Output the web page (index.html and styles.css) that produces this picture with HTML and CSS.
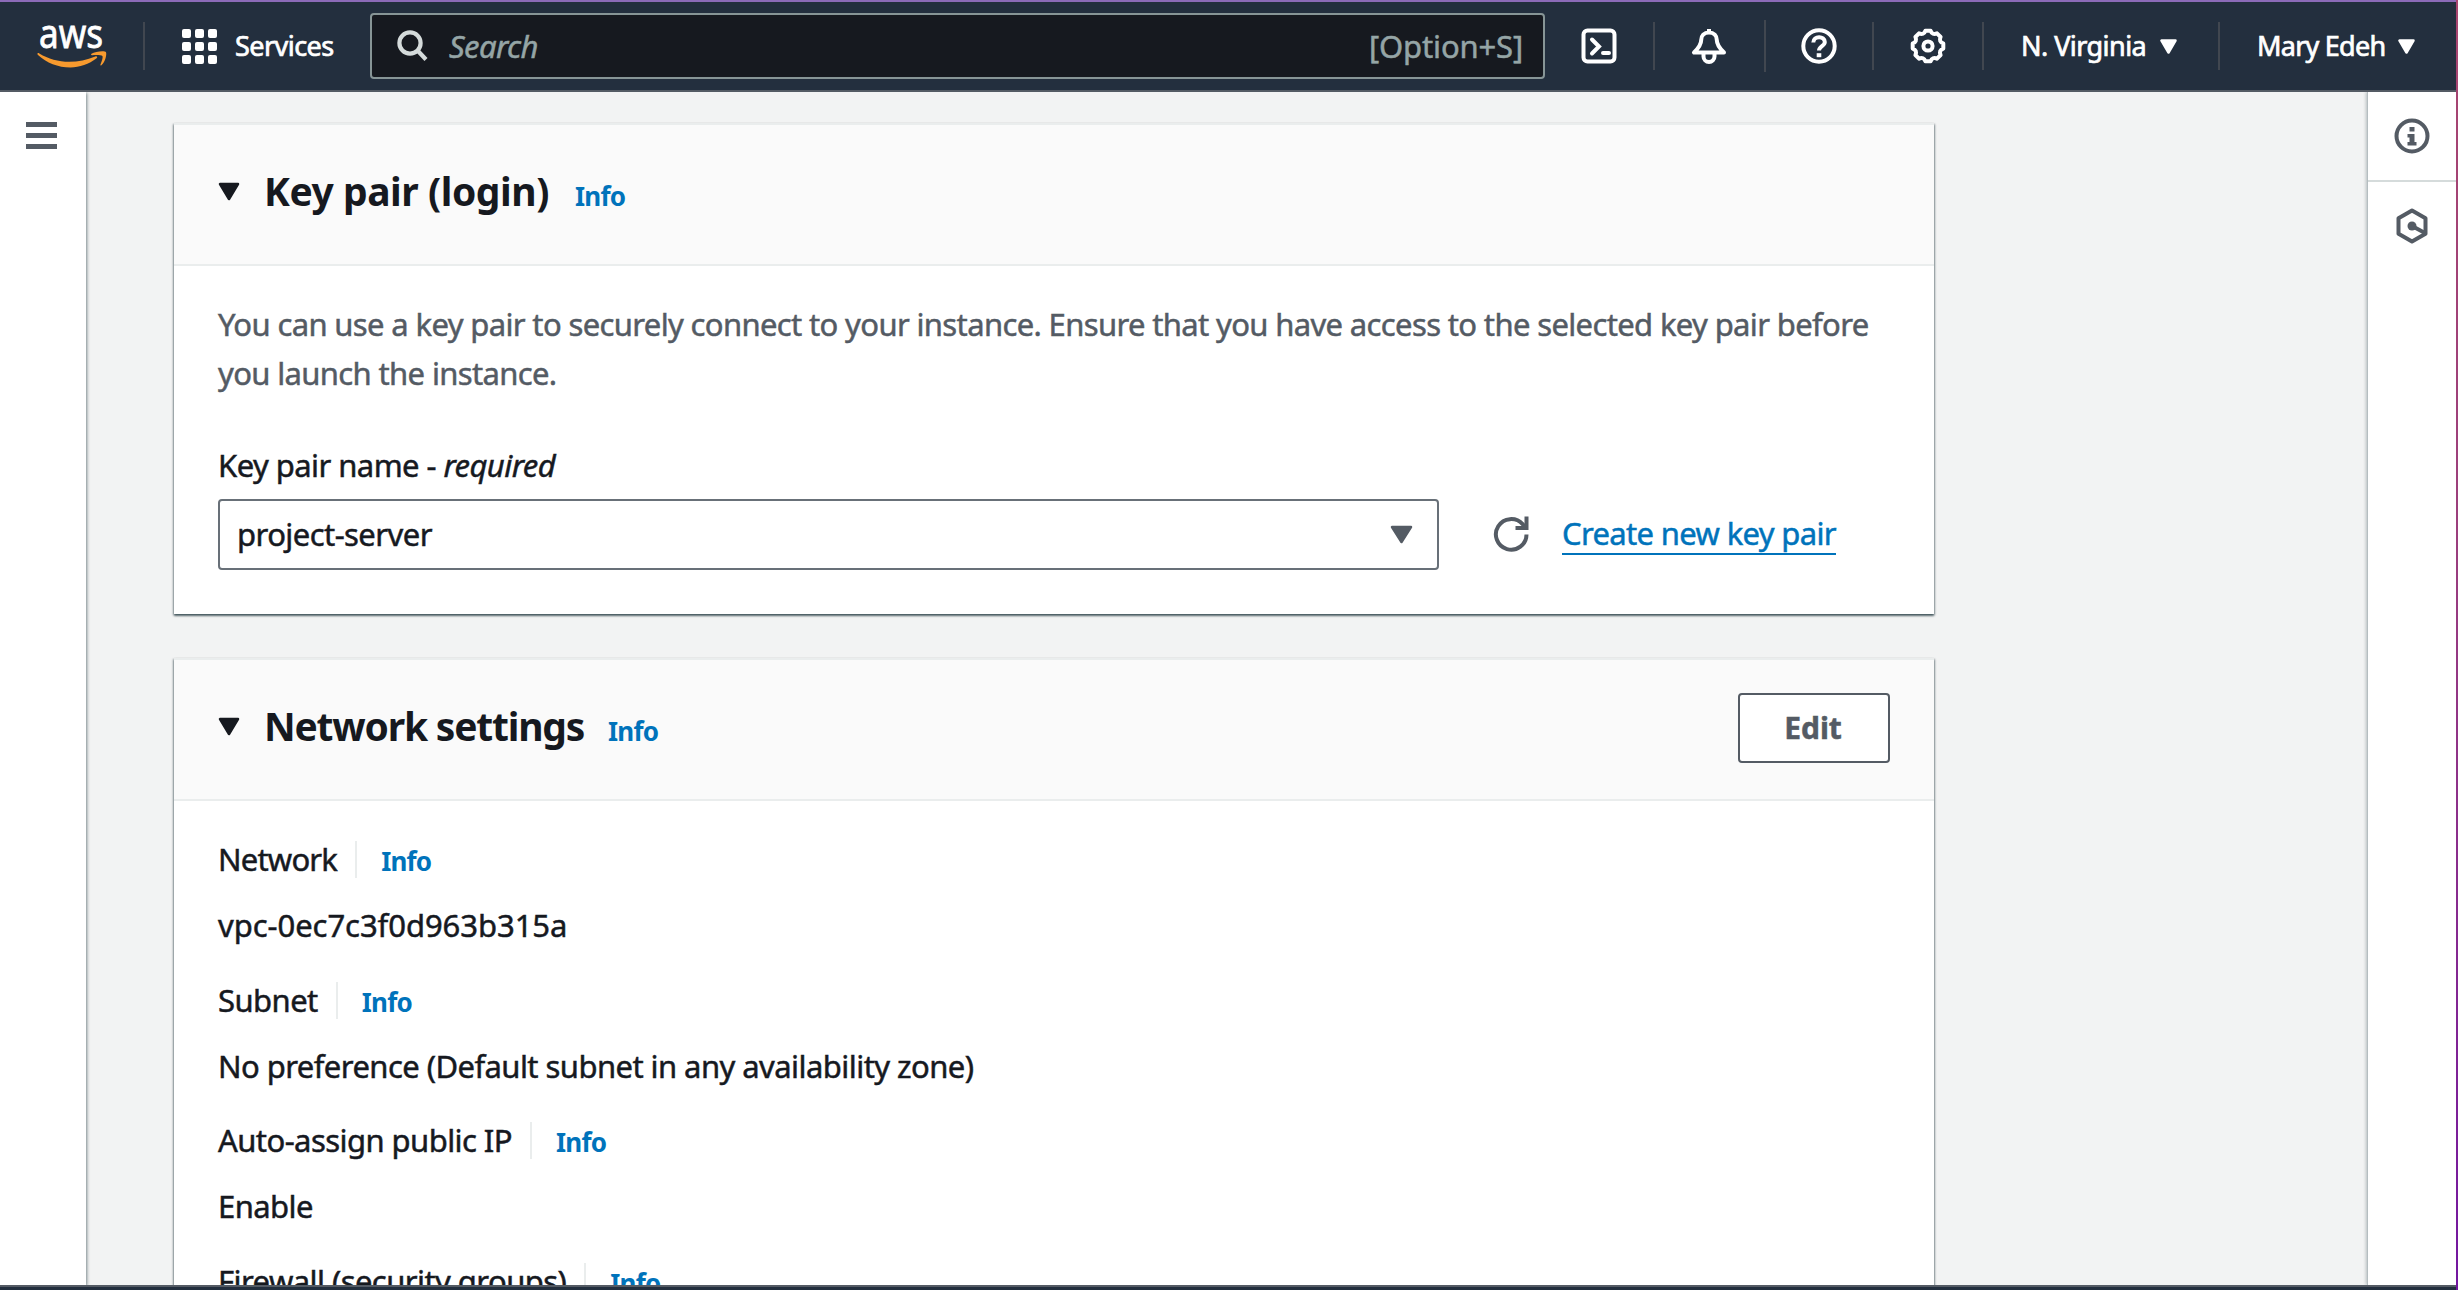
FILE: index.html
```html
<!DOCTYPE html>
<html lang="en">
<head>
<meta charset="utf-8">
<title>Launch an instance | EC2</title>
<link rel="stylesheet" href="styles.css">
</head>
<body>
<div class="screen">
  <header class="topbar">
    <a class="logo" aria-label="AWS">
      <svg width="74" height="52" viewBox="0 0 74 52">
        <text x="2" y="31" textLength="64" lengthAdjust="spacingAndGlyphs" class="logo-text">aws</text>
        <path class="smile" d="M0.5 36.5c0.3-0.8 1-0.6 1.8-0.1 9 5.4 19 8.300 30 8.300 9 0 17.500-1.900 26-5.300 1.600-0.700 2.700 0.800 1.300 1.900C52 47.300 42.500 50.500 33.500 50.500 21 50.500 9.500 45.800 1 38c-0.600-0.600-0.700-1-0.500-1.500z"/>
        <path class="smile" d="M54.500 36.800c3.500-2.500 13.500-3.200 14.400-1.700 1.100 1.600-0.300 9.700-4.500 13.200-0.600 0.500-1.300 0.200-1-0.500 1-2.600 2.900-7.300 2-8.700-1-1.300-6.700-1.200-10.300-0.900-1 0.100-1.400-0.900-0.600-1.400z"/>
      </svg>
    </a>
    <span class="bar"></span>
    <a class="services">
      <svg width="35" height="35" viewBox="0 0 35 35" fill="#fff">
        <rect width="9" height="9" rx="2"/><rect x="13" width="9" height="9" rx="2"/><rect x="26" width="9" height="9" rx="2"/>
        <rect y="13" width="9" height="9" rx="2"/><rect x="13" y="13" width="9" height="9" rx="2"/><rect x="26" y="13" width="9" height="9" rx="2"/>
        <rect y="26" width="9" height="9" rx="2"/><rect x="13" y="26" width="9" height="9" rx="2"/><rect x="26" y="26" width="9" height="9" rx="2"/>
      </svg>
      <span class="nav-text">Services</span>
    </a>
    <div class="search">
      <svg width="32" height="32" viewBox="0 0 32 32" fill="none" stroke="#d5dbdb" stroke-width="4.200"><circle cx="13" cy="13" r="10.600"/><path d="M20.500 20.500l8.500 9"/></svg>
      <span class="placeholder">Search</span>
      <span class="shortcut">[Option+S]</span>
    </div>
    <a class="tool tool-shell"><svg width="36" height="36" viewBox="0 0 36 36"><rect x="2.500" y="2.500" width="31" height="31" rx="4"/><path d="M11 11.500l7 7-7 7M22 25h6" stroke-linecap="round"/></svg></a>
    <span class="bar"></span>
    <a class="tool tool-bell"><svg width="36" height="36" viewBox="0 0 36 36"><path d="M18 1v4M18 4.500c-5 0-7.800 3.500-7.800 7.500 0 5-3 8.500-7.200 12.500h30c-4.200-4-7.200-7.500-7.200-12.500 0-4-2.800-7.500-7.800-7.500z" stroke-linejoin="round"/><path d="M12.500 26v2.500a5.500 5.500 0 0 0 11 0v-2.500"/></svg></a>
    <span class="bar bar-tall"></span>
    <a class="tool tool-help"><svg width="36" height="36" viewBox="0 0 36 36"><circle cx="18" cy="18" r="15.700"/><path d="M12.300 14.500c0-7 11.500-7 11.500-0.500 0 4.200-5.800 4-5.800 8.500"/><path d="M18 25.200v4" stroke-width="4.600"/></svg></a>
    <span class="bar"></span>
    <a class="tool tool-gear"><svg width="36" height="36" viewBox="0 0 36 36"><g transform="translate(18 18)"><path stroke-linejoin="round" d="M15.300 2.600Q10.500 4.350 12.600 9L9 12.600Q4.350 10.500 2.600 15.300L-2.600 15.300Q-4.350 10.500-9 12.600L-12.600 9Q-10.500 4.350-15.300 2.600L-15.300-2.600Q-10.500-4.350-12.600-9L-9-12.600Q-4.350-10.500-2.600-15.300L2.600-15.300Q4.350-10.500 9-12.600L12.600-9Q10.500-4.350 15.300-2.600Z"/><circle r="4.600"/></g></svg></a>
    <span class="bar"></span>
    <a class="menu menu-region"><span class="nav-text region">N. Virginia</span><svg class="caret" width="17" height="15" viewBox="0 0 17 15"><path d="M1.500 1.500h14l-7 12z"/></svg></a>
    <span class="bar"></span>
    <a class="menu menu-user"><span class="nav-text user">Mary Edeh</span><svg class="caret" width="17" height="15" viewBox="0 0 17 15"><path d="M1.500 1.500h14l-7 12z"/></svg></a>
  </header>

  <div class="body">
    <nav class="side-left"><span class="burger"><i></i><i></i><i></i></span></nav>
    <main class="content">
      <section class="card card-keypair">
        <div class="card-head">
          <svg class="toggle" width="22" height="19" viewBox="0 0 22 19"><path d="M2 2h18l-9 15z"/></svg>
          <div class="heading"><h2 class="t-keypair">Key pair (login)</h2><a class="info">Info</a></div>
        </div>
        <div class="card-body">
          <p class="desc">You can use a key pair to securely connect to your instance. Ensure that you have access to the selected key pair before you launch the instance.</p>
          <label class="label">Key pair name - <em>required</em></label>
          <div class="picker">
            <div class="select"><span>project-server</span><svg width="23" height="19" viewBox="0 0 23 19"><path d="M2 2h19l-9.500 15z"/></svg></div>
            <svg class="refresh" width="36" height="36" viewBox="0 0 36 36"><path d="M33.500 18.500A15.300 15.300 0 1 1 29.600 8.200L32 11"/><path d="M33.500 0.500v11.500H22.500"/></svg>
            <a class="link">Create new key pair</a>
          </div>
        </div>
      </section>

      <section class="card card-network">
        <div class="card-head">
          <svg class="toggle" width="22" height="19" viewBox="0 0 22 19"><path d="M2 2h18l-9 15z"/></svg>
          <div class="heading"><h2 class="t-network">Network settings</h2><a class="info">Info</a></div>
          <button class="edit">Edit</button>
        </div>
        <div class="fields">
          <div class="field"><div class="field-name"><span class="name net">Network</span><a class="info">Info</a></div><div class="value vpc">vpc-0ec7c3f0d963b315a</div></div>
          <div class="field"><div class="field-name"><span class="name">Subnet</span><a class="info">Info</a></div><div class="value">No preference (Default subnet in any availability zone)</div></div>
          <div class="field"><div class="field-name"><span class="name">Auto-assign public IP</span><a class="info">Info</a></div><div class="value">Enable</div></div>
          <div class="field"><div class="field-name"><span class="name">Firewall (security groups)</span><a class="info">Info</a></div></div>
        </div>
      </section>
    </main>
    <aside class="side-right">
      <div class="panel-tab"><svg width="36" height="36" viewBox="0 0 36 36"><circle cx="18" cy="18" r="15.500" fill="none" stroke="#545b64" stroke-width="4"/><path fill="#545b64" d="M15.500 9h5v4.500h-5zM13.500 16h7v8h2v3.500h-9V24h2v-4.500h-2z"/></svg></div>
      <div class="panel-tab"><svg width="36" height="36" viewBox="0 0 36 36" fill="none" stroke="#545b64" stroke-width="4"><path stroke-linejoin="round" d="M18 2.500l13.500 7.800v15.400L18 33.500 4.500 25.700V10.300z"/><path d="M18 18l13 7"/><circle cx="18" cy="18" r="4.500" fill="#545b64" stroke="none"/></svg></div>
    </aside>
  </div>
  <footer class="footer"></footer>
</div>
<div class="edge"></div>
</body>
</html>
```
FILE: styles.css
```css
* { box-sizing: border-box; }
body {
  margin: 0;
  width: 2458px;
  height: 1290px;
  overflow: hidden;
  display: flex;
  font-family: "Noto Sans", sans-serif;
  font-size: 31px;
  line-height: 44px;
  letter-spacing: -0.56px;
  color: #16191f;
  -webkit-text-stroke: 0.5px currentColor;
}
svg { display: block; flex: none; }
.screen { width: 2456px; height: 1290px; display: flex; flex-direction: column; border-top: 2px solid #8c6bb8; }
.edge { width: 2px; background: linear-gradient(#a8456f, #9c3f7c 40%, #7316a0); }

/* top navigation */
.topbar {
  height: 90px;
  flex: none;
  display: flex;
  align-items: center;
  background: #232f3e;
  border-bottom: 2px solid #545b64;
  color: #fff;
}
.logo { margin-left: 37px; width: 74px; height: 58px; }
.logo svg { overflow: visible; }
.logo-text { font-size: 40px; font-weight: 400; fill: #fff; letter-spacing: 0; stroke: #fff; stroke-width: 0.8px; }
.smile { fill: #f79a2e; }
.bar { width: 2px; height: 48px; background: #414750; flex: none; }
.bar-tall { height: 52px; }
.logo + .bar { margin-left: 32px; }
.services { display: flex; align-items: center; margin-left: 37px; width: 188px; gap: 18px; }
.nav-text { font-size: 27px; letter-spacing: -0.55px; -webkit-text-stroke: 0.7px currentColor; white-space: nowrap; }
.nav-text.region { letter-spacing: -0.55px; width: 139px; }
.nav-text.user { letter-spacing: -0.75px; width: 141px; }
.search {
  width: 1175px;
  height: 66px;
  display: flex;
  align-items: center;
  background: #16191f;
  border: 2px solid #879596;
  border-radius: 4px;
  padding: 0 20px 0 25px;
  color: #95a5a6;
}
.placeholder { font-style: italic; margin-left: 20px; flex: 1; letter-spacing: -0.6px; }
.shortcut { letter-spacing: -0.15px; }
.tool svg { fill: none; stroke: #fff; stroke-width: 4; }
.tool-shell { margin-left: 36px; margin-right: 36px; }
.tool-bell { margin: 0 37px 0 36px; }
.tool-help { margin: 0 35px 0 35px; }
.tool-gear { margin: 0 36px; }
.menu { display: flex; align-items: center; }
.menu-region { margin: 0 41px 0 37px; }
.menu-user { margin-left: 37px; }
.caret, .toggle, .select svg { fill: currentColor; stroke: currentColor; stroke-width: 2.5; stroke-linejoin: round; }

/* page frame */
.body { flex: 1; min-height: 0; display: flex; background: #f2f3f3; overflow: hidden; }
.side-left { width: 86px; background: #fff; box-shadow: 1px 1px 3px rgba(0, 28, 36, 0.5); padding: 30px 0 0 26px; }
.burger { display: flex; flex-direction: column; gap: 6px; }
.burger i { width: 31px; height: 5px; background: #545b64; }
.side-right { width: 89px; background: #fff; border-left: 1px solid #b5bdc0; box-shadow: -1px 0 3px rgba(0, 28, 36, 0.25); }
.panel-tab { height: 90px; display: flex; align-items: center; justify-content: center; padding-right: 1px; padding-bottom: 3px; }
.panel-tab + .panel-tab { border-top: 2px solid #d5dbdb; margin-top: -2px; padding-bottom: 1px; }
.content { flex: 1; padding: 31px 0 0 88px; }
.footer { height: 5px; flex: none; background: #232f3e; border-top: 2px solid #545b64; }

/* containers */
.card { width: 1760px; background: #fff; border-top: 2px solid #eaeded; box-shadow: 0 2px 2px rgba(0, 28, 36, 0.5), 1px 1px 2px rgba(0, 28, 36, 0.3), -1px 1px 2px rgba(0, 28, 36, 0.3); }
.card-keypair { height: 491px; }
.card-network { margin-top: 44px; height: 760px; }
.card-head { height: 141px; display: flex; align-items: center; background: #fafafa; border-bottom: 2px solid #eaeded; padding: 0 44px; }
.toggle { margin-bottom: 7px; }
.heading { display: flex; align-items: baseline; margin-left: 24px; margin-bottom: 8px; flex: 1; }
h2 { margin: 0; font-size: 39px; line-height: 48px; font-weight: 700; -webkit-text-stroke: 0; white-space: nowrap; }
.t-keypair { letter-spacing: -0.45px; width: 311px; }
.t-network { letter-spacing: -1.2px; width: 344px; }
.info { font-size: 26px; line-height: 36px; font-weight: 700; letter-spacing: -0.8px; color: #0073bb; -webkit-text-stroke: 0; }
.card-body { padding: 34px 44px 0; }
.desc { margin: 0; line-height: 49px; color: #545b64; letter-spacing: -0.64px; }
.label { display: block; margin-top: 45px; }
.picker { display: flex; align-items: center; margin-top: 12px; }
.select { width: 1221px; height: 71px; border: 2px solid #687078; border-radius: 4px; padding: 0 24px 2px 17px; display: flex; align-items: center; justify-content: space-between; }
.select svg { color: #545b64; position: relative; top: 1px; }
.refresh { margin-left: 54px; margin-bottom: 1px; fill: none; stroke: #545b64; stroke-width: 4; }
.link { margin-left: 33px; margin-bottom: 1px; height: 42px; line-height: 40px; border-bottom: 2px solid #0073bb; color: #0073bb; white-space: nowrap; letter-spacing: -0.65px; }
.edit { width: 152px; height: 70px; margin-bottom: 3px; padding: 0 2px 0 0; background: #fff; border: 2px solid #545b64; border-radius: 4px; font: 700 30px/40px "Noto Sans", sans-serif; letter-spacing: 0; color: #545b64; }

/* network summary */
.fields { padding: 40px 44px 0; display: flex; flex-direction: column; gap: 34.5px; }
.field { display: flex; flex-direction: column; gap: 25px; }
.field-name { display: flex; align-items: center; height: 37px; }
.field-name .name { padding-right: 18px; border-right: 2px solid #eaeded; line-height: 37px; }
.field-name .net { letter-spacing: -0.8px; }
.field-name .info { margin-left: 24px; padding-top: 3px; }
.vpc { letter-spacing: -0.05px; }
```
